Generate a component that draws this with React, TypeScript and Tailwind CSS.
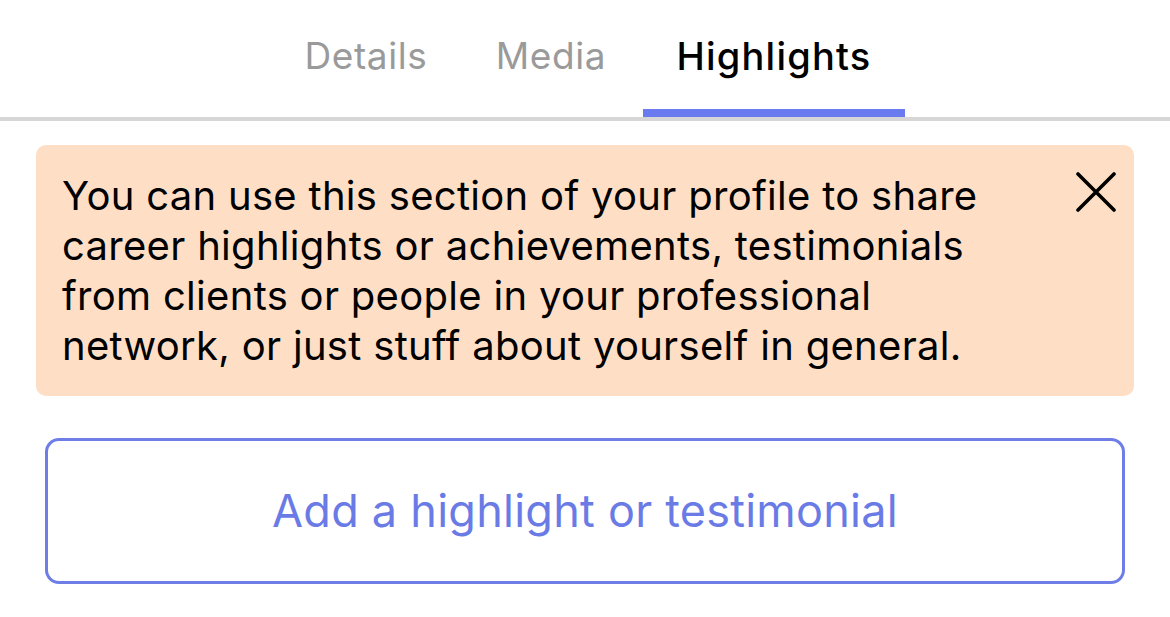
import React from "react";

export default function App() {
  return (
    <div className="w-[1170px] h-[617px] bg-white overflow-hidden" style={{ fontFamily: "Inter, 'Noto Sans', sans-serif" }}>
      <div className="h-[121px] border-b-[4px] border-[#d6d6d6] flex">
        <div className="w-[273px] shrink-0" />
        <div className="w-[186px] flex justify-center pt-[33px] text-[37px] leading-[46px] tracking-[0.6px] text-[#9a9a9a]">Details</div>
        <div className="w-[184px] flex justify-center pt-[33px] text-[37px] leading-[46px] tracking-[0.6px] text-[#9a9a9a]">Media</div>
        <div className="relative w-[262px] flex justify-center pt-[33px] text-[38px] leading-[46px] font-medium tracking-[1.2px] text-black">
          Highlights
          <div className="absolute left-0 right-0 bottom-0 h-[8px] bg-[#6a7bef]" />
        </div>
      </div>
      <div className="px-[36px] pt-[24px]">
        <div className="relative rounded-[10px] bg-[#fedfc6] pl-[26px] pt-[26px] pb-[25px]">
          <p className="text-[40px] leading-[50px] tracking-[0.3px] text-black whitespace-nowrap">
            You can use this section of your profile to share
            <br />
            career highlights or achievements, testimonials
            <br />
            from clients or people in your professional
            <br />
            network, or just stuff about yourself in general.
          </p>
          <button className="absolute right-[18px] top-[27px] w-[40px] h-[40px] flex items-center justify-center">
            <svg width="40" height="40" viewBox="0 0 40 40" fill="none" stroke="black" strokeWidth="3.6" strokeLinecap="round">
              <path d="M2 2 L38 38 M38 2 L2 38" />
            </svg>
          </button>
        </div>
      </div>
      <div className="px-[45px] pt-[42px]">
        <button className="w-full h-[146px] rounded-[14px] border-[3px] border-[#6e7ee6] flex items-center justify-center text-[45px] tracking-[0.25px] text-[#6a7be6]">
          Add a highlight or testimonial
        </button>
      </div>
    </div>
  );
}
